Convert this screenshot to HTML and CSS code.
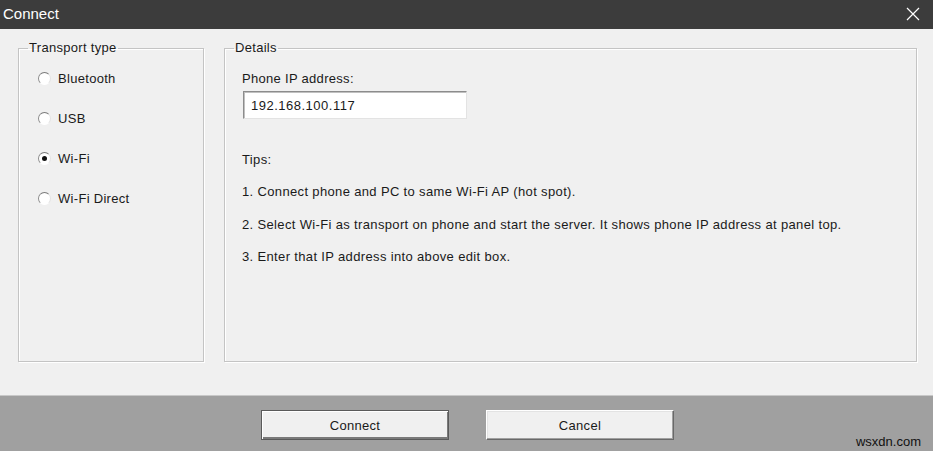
FILE: index.html
```html
<!DOCTYPE html>
<html lang="en">
<head>
<meta charset="utf-8">
<title>Connect</title>
<link rel="stylesheet" href="styles.css">
</head>
<body>
<div class="window">
  <div class="titlebar">
    <span class="title">Connect</span>
    <svg class="close" width="14" height="14" viewBox="0 0 14 14"><path d="M1 1 L13 13 M13 1 L1 13" stroke="#ffffff" stroke-width="1.2" fill="none"/></svg>
  </div>
  <div class="main">
    <fieldset class="group transport">
      <legend>Transport type</legend>
      <label class="radio"><span class="dot"></span>Bluetooth</label>
      <label class="radio"><span class="dot"></span>USB</label>
      <label class="radio"><span class="dot checked"></span>Wi-Fi</label>
      <label class="radio"><span class="dot"></span>Wi-Fi Direct</label>
    </fieldset>
    <fieldset class="group details">
      <legend>Details</legend>
      <div class="label">Phone IP address:</div>
      <div class="edit">192.168.100.117</div>
      <div class="tips">
        <p>Tips:</p>
        <p>1. Connect phone and PC to same Wi-Fi AP (hot spot).</p>
        <p>2. Select Wi-Fi as transport on phone and start the server. It shows phone IP address at panel top.</p>
        <p>3. Enter that IP address into above edit box.</p>
      </div>
    </fieldset>
  </div>
  <div class="footer">
    <button class="btn default">Connect</button>
    <button class="btn">Cancel</button>
    <span class="watermark">wsxdn.com</span>
  </div>
</div>
</body>
</html>
```

FILE: styles.css
```css
html, body {
  margin: 0;
  padding: 0;
}
body {
  font-family: "Liberation Sans", "DejaVu Sans", sans-serif;
  font-size: 13px;
  color: #1a1a1a;
  background: #f0f0f0;
}
.window {
  width: 933px;
  height: 451px;
  display: flex;
  flex-direction: column;
  overflow: hidden;
}
.titlebar {
  height: 29px;
  background: #3c3c3c;
  display: flex;
  align-items: center;
  justify-content: space-between;
  padding: 0 13px 0 3px;
  flex: none;
}
.title {
  color: #ffffff;
  font-size: 15px;
  margin-top: -2px;
}
.close {
  display: block;
  margin-top: -2px;
}
.main {
  flex: 1;
  display: flex;
  gap: 20px;
  padding: 11px 16px 33px 18px;
  background: #f0f0f0;
  letter-spacing: 0.3px;
}
.group {
  margin: 0;
  border: 1px solid #c4c4c4;
  box-shadow: inset 1px 1px 0 #ffffff, 1px 1px 0 #ffffff;
  padding: 0 8px 0 9px;
  min-width: 0;
}
.group legend {
  padding: 0 1px;
  line-height: 16px;
  color: #1a1a1a;
}
.transport {
  width: 186px;
  box-sizing: border-box;
  flex: none;
  display: flex;
  flex-direction: column;
  padding-top: 14px;
}
.details {
  flex: 1;
  padding-left: 9px;
}
.radio {
  display: flex;
  align-items: center;
  height: 16px;
  margin-bottom: 24.3px;
  padding-left: 10px;
}
.dot {
  width: 13px;
  height: 13px;
  box-sizing: border-box;
  border-radius: 50%;
  border: 1px solid;
  border-color: #7a7a7a #e3e3e3 #ffffff #8a8a8a;
  background: #ffffff;
  margin-right: 7px;
  display: flex;
  align-items: center;
  justify-content: center;
  flex: none;
}
.dot.checked::after {
  content: "";
  width: 5px;
  height: 5px;
  border-radius: 50%;
  background: #111111;
}
.label {
  margin-top: 15px;
  padding-left: 8px;
  line-height: 16px;
}
.edit {
  margin: 4px 0 0 9px;
  width: 224px;
  height: 28px;
  box-sizing: border-box;
  border: 1px solid;
  border-color: #8c8c8c #e3e3e3 #e3e3e3 #8c8c8c;
  box-shadow: inset 1px 1px 0 #c0c0c0;
  background: #ffffff;
  padding-left: 7px;
  display: flex;
  align-items: center;
  letter-spacing: 0.5px;
}
.tips {
  padding-left: 8px;
  margin-top: 33px;
  letter-spacing: 0.35px;
}
.tips p {
  margin: 0 0 16.4px 0;
  line-height: 16px;
}
.footer {
  flex: none;
  height: 56px;
  box-sizing: border-box;
  background: #a0a0a0;
  border-top: 1px solid #c8c8c8;
  display: flex;
  justify-content: center;
  align-items: flex-start;
  gap: 37px;
  padding-top: 14px;
  padding-left: 2px;
  position: relative;
}
.btn {
  width: 188px;
  height: 30px;
  box-sizing: border-box;
  font-family: "Liberation Sans", "DejaVu Sans", sans-serif;
  font-size: 13px;
  color: #1a1a1a;
  background: #f0f0f0;
  border: 1px solid;
  border-color: #ffffff #696969 #696969 #ffffff;
  box-shadow: inset -1px -1px 0 #a0a0a0, inset 1px 1px 0 #e3e3e3;
  padding: 0;
  letter-spacing: 0.3px;
}
.btn.default {
  border: 1px solid #5a5a5a;
  box-shadow: inset 1px 1px 0 #ffffff, inset -1px -2px 0 #7a7a7a;
}
.watermark {
  position: absolute;
  right: 12px;
  bottom: 2px;
  font-size: 13px;
  color: #111111;
  font-family: "Liberation Sans", sans-serif;
}
```
